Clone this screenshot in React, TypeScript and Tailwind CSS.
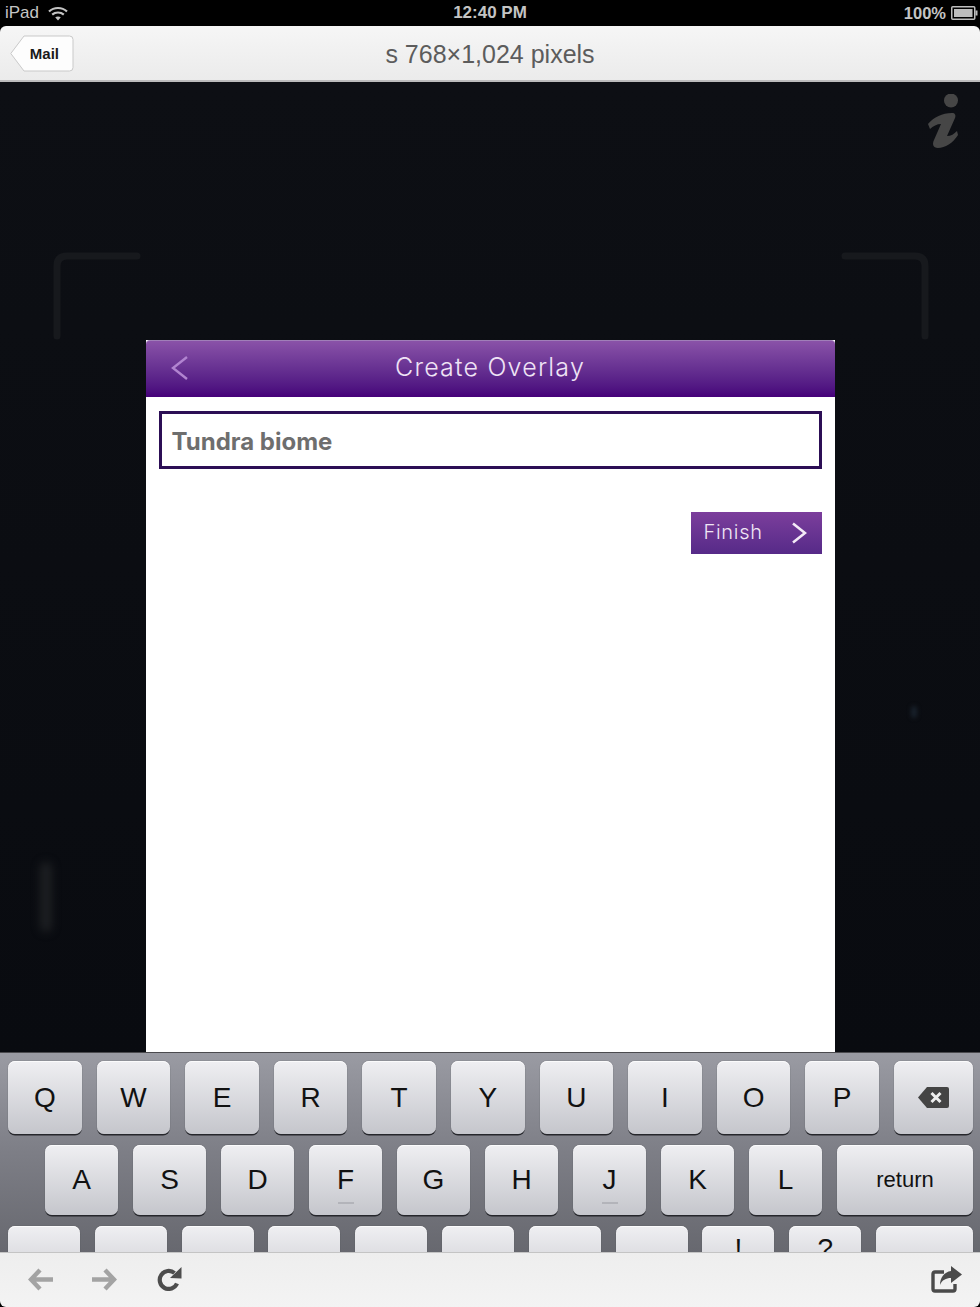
import React from "react";

const sans = "font-['Liberation_Sans',Arial,sans-serif]";

const row1 = ["Q", "W", "E", "R", "T", "Y", "U", "I", "O", "P"];
const row2 = ["A", "S", "D", "F", "G", "H", "J", "K", "L"];

function Key({ children, className = "", bump = false }: { children?: React.ReactNode; className?: string; bump?: boolean }) {
    return (
        <div className={`relative flex items-center justify-center rounded-[7px] bg-gradient-to-b from-[#efeff2] to-[#c5c6cc] leading-none text-[#111] shadow-[0_1.5px_0_#26272c,0_0_1px_#44454c,inset_0_1px_0_#fbfbfc] ${className}`}>
            {children}
            {bump && <span className="absolute bottom-[11px] left-1/2 h-[2px] w-[16px] -translate-x-1/2 bg-[#b3b4ba]" />}
        </div>
    );
}

function Corner({ flip = false }: { flip?: boolean }) {
    return (
        <svg width="88" height="88" viewBox="0 0 88 88" className={flip ? "-scale-x-100" : ""} fill="none">
            <path d="M4 84V14Q4 4 14 4H84" stroke="#17191d" strokeWidth="7" strokeLinecap="round" />
        </svg>
    );
}

function StatusBar() {
    return (
        <div className={`relative flex h-[26px] shrink-0 items-center justify-between bg-black pl-[5px] pr-[2px] text-[17px] text-[#c4c4c4] ${sans}`}>
            <div className="flex items-center gap-[9px]">
                <span>iPad</span>
                <svg width="20" height="15" viewBox="0 0 20 15" fill="none" stroke="#c4c4c4" strokeWidth="2.2">
                    <path d="M1 5.5C6 .8 14 .8 19 5.5" />
                    <path d="M4.2 8.6C7.4 5.8 12.6 5.8 15.8 8.6" />
                    <path d="M10 14.5L7.2 11.3C8.8 10.2 11.2 10.2 12.8 11.3Z" fill="#c4c4c4" stroke="none" />
                </svg>
            </div>
            <span className="absolute left-1/2 -translate-x-1/2 font-bold">12:40 PM</span>
            <div className="flex items-center gap-[5px] text-[16.5px] font-bold">
                <span>100%</span>
                <svg width="27" height="14" viewBox="0 0 27 14">
                    <rect x="0.75" y="0.75" width="23" height="12.5" fill="none" stroke="#bdbdbd" strokeWidth="1.5" rx="1" />
                    <rect x="3" y="3" width="18.5" height="8" fill="#bdbdbd" />
                    <rect x="24.5" y="4.5" width="2" height="5" fill="#bdbdbd" />
                </svg>
            </div>
        </div>
    );
}

function TopBar() {
    return (
        <div className="relative z-10 flex h-[56px] shrink-0 items-center rounded-t-[6px] border-b-2 border-[#bcbcbc] bg-gradient-to-b from-[#f6f6f6] to-[#ebebeb] pl-[10px]">
            <div className="relative flex h-[37px] w-[64px] items-center justify-end pr-[15px] pt-[2px]">
                <svg width="64" height="37" viewBox="0 0 64 37" className="absolute inset-0">
                    <path d="M.8 18.5L14 1H59.5Q63 1 63 4.5V32.5Q63 36 59.5 36H14Z" fill="#fdfdfd" stroke="#c9c9c9" />
                </svg>
                <span className={`relative text-[15px] font-bold text-[#1a1a1a] ${sans}`}>Mail</span>
            </div>
            <span className={`absolute left-1/2 top-[12px] -translate-x-1/2 text-[25px] leading-[32px] whitespace-nowrap text-[#5c5c5c] ${sans}`}>s 768×1,024 pixels</span>
        </div>
    );
}

function Stage() {
    return (
        <div className="relative flex min-h-0 flex-1 justify-center overflow-hidden bg-gradient-to-b from-[#0d0f14] to-[#090b10] pt-[258px]">
            {/* faint camera frame and info mark behind the dialog */}
            <div className="absolute left-[53px] top-[170px]"><Corner /></div>
            <div className="absolute left-[841px] top-[170px]"><Corner flip /></div>
            <div className="absolute left-[40px] top-[780px] h-[70px] w-[12px] rounded-full bg-[#1d1f22] blur-[4px]" />
            <div className="absolute left-[911px] top-[624px] h-[12px] w-[6px] rounded-full bg-[#18212b] blur-[2px]" />
            <svg width="32" height="56" viewBox="0 0 32 56" className="absolute left-[927px] top-[12px]" fill="#464646">
                <circle cx="24" cy="6.5" r="7" />
                <path d="M1 30C7 23 15 19 25 19C28 19 29 21 28 24L20 42C24 42 27 40 30 37L31 41C26 49 18 54 11 54C6 54 5 50 7 46L14 30C10 30 6 32 3 35Z" />
            </svg>

            <div className="relative flex h-full w-[689px] flex-col bg-white">
                <div className="relative flex h-[57px] shrink-0 items-center justify-center rounded-t-[4px] border-t border-[#a07fb8] bg-gradient-to-b from-[#8a52a8] to-[#46007a]">
                    <svg width="20" height="26" viewBox="0 0 20 26" fill="none" stroke="#b184d0" strokeWidth="2.4" className="absolute left-[24px] top-[14px]">
                        <path d="M17 2L3 13L17 24" />
                    </svg>
                    <span className="-mt-[3px] font-['Inter',sans-serif] text-[25px] font-light tracking-[1.2px] text-[#efe3f5]">Create Overlay</span>
                </div>
                <div className="flex flex-col items-end px-[13px] pt-[14px]">
                    <div className="flex h-[58px] w-full items-center border-[3px] border-[#2c0e55] pl-[10px] pt-[3px]">
                        <span className="font-['Inter',sans-serif] text-[24px] font-bold text-[#6e6e6e]">Tundra biome</span>
                    </div>
                    <div className="mt-[43px] flex h-[42px] w-[131px] items-center justify-between bg-gradient-to-b from-[#7c3e9c] to-[#562a88] pl-[13px] pr-[15px]">
                        <span className="-mt-[3px] font-['Inter',sans-serif] text-[20px] font-light tracking-[0.7px] text-[#f0e6f5]">Finish</span>
                        <svg width="16" height="22" viewBox="0 0 16 22" fill="none" stroke="#f4eaf7" strokeWidth="2.6">
                            <path d="M2 1.5L14 11L2 20.5" />
                        </svg>
                    </div>
                </div>
            </div>
        </div>
    );
}

function Keyboard() {
    return (
        <div className={`h-[200px] shrink-0 overflow-hidden border-t border-[#4a4a4e] bg-gradient-to-b from-[#9a9ba3] via-[#7d7e86] to-[#67686f] text-[28px] ${sans}`}>
            <div className="flex flex-col gap-[11px] pl-[8px] pr-[7px] pt-[8px]">
                <div className="flex gap-[15px]">
                    {row1.map((k) => (
                        <Key key={k} className="h-[73px] w-[73.6px]">{k}</Key>
                    ))}
                    <Key className="h-[73px] flex-1">
                        <svg width="31" height="21" viewBox="0 0 31 21">
                            <path d="M0 10.5L9 0H29Q31 0 31 2V19Q31 21 29 21H9Z" fill="#444" />
                            <path d="M13.5 6L22.5 15M22.5 6L13.5 15" stroke="#eee" strokeWidth="3" />
                        </svg>
                    </Key>
                </div>
                <div className="flex gap-[15px] pl-[37px]">
                    {row2.map((k) => (
                        <Key key={k} className="h-[70px] w-[73px]" bump={k === "F" || k === "J"}>{k}</Key>
                    ))}
                    <Key className="h-[70px] flex-1 text-[22px]">return</Key>
                </div>
                <div className="flex gap-[14.8px]">
                    {Array.from({ length: 10 }).map((_, i) => (
                        <Key key={i} className="h-[70px] w-[72px] !items-start pt-[9px]">
                            {i === 8 ? "!" : i === 9 ? "?" : ""}
                        </Key>
                    ))}
                    <Key className="h-[70px] flex-1" />
                </div>
            </div>
        </div>
    );
}

function BottomBar() {
    return (
        <div className="relative z-10 flex h-[55px] shrink-0 items-center justify-between rounded-b-[6px] border-t border-[#c4c4c4] bg-gradient-to-b from-[#eeeeee] to-[#f3f3f3] pb-[2px] pl-[28px] pr-[18px]">
            <div className="flex items-center gap-[39px]">
                <svg width="25" height="23" viewBox="0 0 25 23" fill="none" stroke="#a3a3a3" strokeWidth="4.4">
                    <path d="M12 2L3 11.5L12 21M3 11.5H25" />
                </svg>
                <svg width="25" height="23" viewBox="0 0 25 23" fill="none" stroke="#a3a3a3" strokeWidth="4.4">
                    <path d="M13 2L22 11.5L13 21M22 11.5H0" />
                </svg>
                <svg width="25" height="24" viewBox="0 0 25 24" className="ml-[1px]" fill="none">
                    <path d="M20 16.5A9 9 0 1 1 17.5 6" stroke="#4d4d4d" strokeWidth="4.2" />
                    <path d="M13 11L24.5 11.5V0Z" fill="#4d4d4d" />
                </svg>
            </div>
            <svg width="31" height="27" viewBox="0 0 31 27" fill="none">
                <path d="M13 6H4Q2 6 2 8V23Q2 25 4 25H22Q24 25 24 23V18" stroke="#4a4a4a" strokeWidth="3.4" />
                <path d="M20 0L31 8.5L20 17V12C15 12 11 14 9 19C9 12 13 6 20 5Z" fill="#4a4a4a" />
            </svg>
        </div>
    );
}

export default function App() {
    return (
        <div className="flex h-[1307px] w-[980px] flex-col overflow-hidden bg-black">
            <StatusBar />
            <TopBar />
            <Stage />
            <Keyboard />
            <BottomBar />
        </div>
    );
}
